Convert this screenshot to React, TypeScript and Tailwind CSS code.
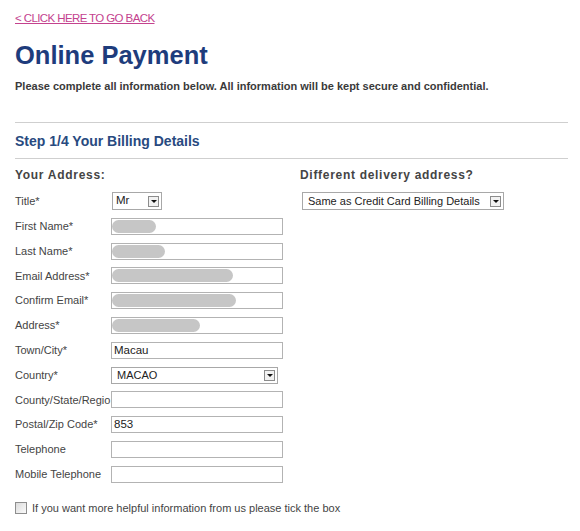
type Row = { label: string; value?: string; blur?: number; select?: boolean };

const rows: Row[] = [
  { label: "First Name*", blur: 44 },
  { label: "Last Name*", blur: 53 },
  { label: "Email Address*", blur: 121 },
  { label: "Confirm Email*", blur: 124 },
  { label: "Address*", blur: 88 },
  { label: "Town/City*", value: "Macau" },
  { label: "Country*", value: "MACAO", select: true },
  { label: "County/State/Regio" },
  { label: "Postal/Zip Code*", value: "853" },
  { label: "Telephone" },
  { label: "Mobile Telephone" },
];

function Arrow() {
  return (
    <span className="ml-auto mr-[2px] flex h-[11px] w-[11px] shrink-0 items-center justify-center border border-[#8c8c8c] bg-[#f2f2f2]">
      <span className="h-0 w-0 border-x-[3px] border-t-[3px] border-x-transparent border-t-[#111]" />
    </span>
  );
}

function Field({ row }: { row: Row }) {
  if (row.select) {
    return (
      <div className="flex h-[17px] w-[167px] items-center border border-[#a8a8a8] bg-white pl-[5px] text-[11px] text-[#222]">
        <span>{row.value}</span>
        <Arrow />
      </div>
    );
  }
  return (
    <div className="relative flex h-[17px] w-[172px] items-center border border-[#b3b3b3] bg-white pl-[2px] text-[11.5px] text-[#222]">
      {row.blur && (
        <span
          className="absolute left-0 top-[1px] h-[13px] rounded-full bg-[#c6c6c6] blur-[0.6px]"
          style={{ width: row.blur }}
        />
      )}
      {row.value && <span>{row.value}</span>}
    </div>
  );
}

export default function App() {
  return (
    <div className="min-h-screen bg-white pl-[15px] pr-[12px] font-['Liberation_Sans',Arial,sans-serif]">
      <a href="#" className="block pt-[11px] text-[11.5px] leading-[14px] tracking-[-0.6px] text-[#c4428e] underline">
        &lt; CLICK HERE TO GO BACK
      </a>
      <h1 className="mt-[15px] text-[25.5px] font-bold leading-[30px] text-[#1e3c7c]">Online Payment</h1>
      <p className="mt-[9px] text-[11px] font-bold leading-[14px] text-[#3a3a3a]">
        Please complete all information below. All information will be kept secure and confidential.
      </p>
      <div className="mt-[29px] border-t border-[#cfcfcf]" />
      <h2 className="mt-[9px] text-[14px] font-bold leading-[18px] text-[#284a80]">Step 1/4 Your Billing Details</h2>
      <div className="mt-[8px] border-t border-[#cfcfcf]" />

      <div className="grid grid-cols-[285px_1fr]">
        <div>
          <h3 className="mt-[8px] text-[12px] font-bold leading-[16px] tracking-[0.7px] text-[#444]">Your Address:</h3>
          <div className="mt-[9px] flex flex-col gap-[7.8px] text-[11px] text-[#444]">
            <div className="flex h-[18px] items-center">
              <span className="w-[97px]">Title*</span>
              <div className="flex h-[18px] w-[50px] items-center border border-[#a8a8a8] bg-white pl-[3px] text-[11.5px] text-[#222]">
                <span>Mr</span>
                <Arrow />
              </div>
            </div>
            {rows.map((r) => (
              <div key={r.label} className="flex h-[17px] items-center">
                <span className="w-[96px] shrink-0 whitespace-nowrap">{r.label}</span>
                <Field row={r} />
              </div>
            ))}
          </div>
        </div>
        <div>
          <h3 className="mt-[8px] text-[12px] font-bold leading-[16px] tracking-[0.7px] text-[#444]">
            Different delivery address?
          </h3>
          <div className="ml-[2px] mt-[9px] flex h-[18px] w-[202px] items-center border border-[#a8a8a8] bg-white pl-[5px] text-[11px] text-[#222]">
            <span>Same as Credit Card Billing Details</span>
            <Arrow />
          </div>
        </div>
      </div>

      <label className="mt-[17px] flex items-center gap-[5px] text-[11px] text-[#444]">
        <span className="h-[12px] w-[12px] border border-[#8e8e8e] bg-gradient-to-br from-[#dcdcdc] to-[#fafafa]" />
        <span>If you want more helpful information from us please tick the box</span>
      </label>
    </div>
  );
}
